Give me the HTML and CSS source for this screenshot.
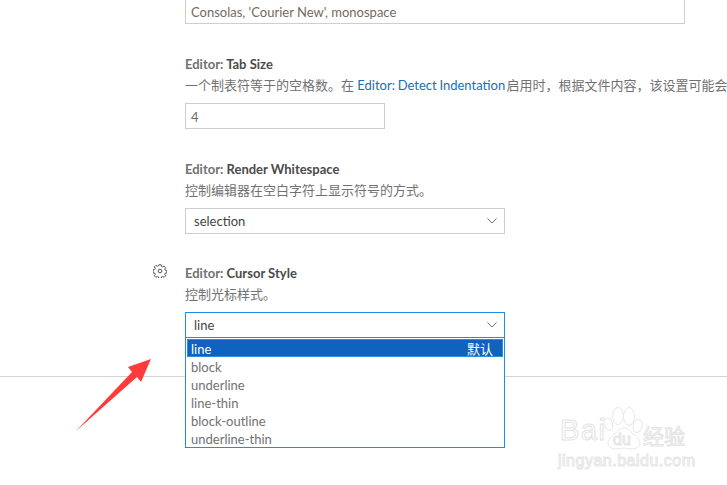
FILE: index.html
```html
<!DOCTYPE html>
<html lang="zh-CN">
<head>
  <meta charset="UTF-8">
  <title>Settings</title>
  <link rel="stylesheet" href="styles.css">
</head>
<body>
  <div class="list">
    <div class="setting first">
      <div class="input wide">Consolas, 'Courier New', monospace</div>
    </div>
    <div class="setting">
      <div class="title"><span class="cat">Editor: </span>Tab Size</div>
      <div class="desc">一个制表符等于的空格数。在 <span class="link">Editor: Detect Indentation</span> 启用时，根据文件内容，该设置可能会</div>
      <div class="input small">4</div>
    </div>
    <div class="setting">
      <div class="title"><span class="cat">Editor: </span>Render Whitespace</div>
      <div class="desc">控制编辑器在空白字符上显示符号的方式。</div>
      <div class="select">selection
        <svg class="chev" width="10" height="6" viewBox="0 0 10 6"><path d="M.5 .5 L5 5 L9.5 .5" fill="none" stroke="#6f6f6f" stroke-width="1"/></svg>
      </div>
    </div>
    <div class="setting last">
      <svg class="gear" width="14" height="14" viewBox="0 0 14 14" fill="none" stroke="#555" stroke-width="1">
        <circle cx="7" cy="7" r="1.8"/>
        <path d="M5.8 .8h2.4l.3 1.7 1.1.5 1.5-1 1.6 1.6-1 1.5.5 1.1 1.7.3v2.4l-1.7.3-.5 1.1 1 1.5-1.6 1.6-1.5-1-1.1.5-.3 1.7H5.8l-.3-1.7-1.1-.5-1.5 1-1.6-1.6 1-1.5-.5-1.1-1.7-.3V5.8l1.7-.3.5-1.1-1-1.5 1.6-1.6 1.5 1 1.1-.5z"/>
      </svg>
      <div class="title"><span class="cat">Editor: </span>Cursor Style</div>
      <div class="desc">控制光标样式。</div>
      <div class="select open">line
        <svg class="chev" width="10" height="6" viewBox="0 0 10 6"><path d="M.5 .5 L5 5 L9.5 .5" fill="none" stroke="#6f6f6f" stroke-width="1"/></svg>
        <ul class="menu">
          <li class="on">line<span>默认</span></li>
          <li>block</li>
          <li>underline</li>
          <li>line-thin</li>
          <li>block-outline</li>
          <li>underline-thin</li>
        </ul>
      </div>
    </div>
  </div>
  <div class="rule"></div>

  <svg class="arrow" width="90" height="85" viewBox="70 355 90 85">
    <path d="M151 359 L141 382 L137 377 L76 431 L132 372 L128 367 Z" fill="#ff3b3b"/>
  </svg>

  <div class="mark">
    <div class="markTop">
      <span class="bai">Bai</span>
      <svg class="paw" width="40" height="43" viewBox="0 0 40 43" fill="#fff" stroke="#e8e8e8" stroke-width="1">
        <ellipse cx="4.5" cy="17" rx="4" ry="6.5" transform="rotate(-15 4.5 17)"/>
        <ellipse cx="14" cy="9" rx="5.5" ry="8.5"/>
        <ellipse cx="25" cy="9.5" rx="5.5" ry="9"/>
        <ellipse cx="33.5" cy="19" rx="4.5" ry="6.5" transform="rotate(15 33.5 19)"/>
        <path d="M20 21c4 0 6 3 9 6 3 2 7 5 7 9 0 4-4 6-8 6-3 0-5-1-8-1s-5 1-8 1c-4 0-8-2-8-6 0-4 4-7 7-9 3-3 5-6 9-6z"/>
        <text x="18" y="38" text-anchor="middle" class="du">du</text>
      </svg>
      <span class="jy">经验</span>
    </div>
    <div class="url">jingyan.baidu.com</div>
  </div>
</body>
</html>
```

FILE: styles.css
```css
* {
  margin: 0;
  padding: 0;
  box-sizing: border-box;
}
html,
body {
  width: 100%;
  height: 100%;
  overflow: hidden;
  background-color: white;
  font-family: "Lato", "Noto Sans CJK SC", sans-serif;
  font-size: 13px;
  color: #717171;
}
.list {
  margin-top: -2px;
  padding-left: 185px;
}
.setting {
  position: relative;
  width: 542px;
  margin-top: 32px;
  white-space: nowrap;
}
.setting.first {
  margin-top: 0;
}
.setting.last {
  margin-top: 31px;
}
.title {
  height: 18px;
  line-height: 16px;
  font-weight: 700;
  color: #4a4a4a;
}
.cat {
  color: #717171;
}
.desc {
  height: 26px;
  margin-top: 3px;
  line-height: 16px;
  color: #717171;
}
.link {
  margin-right: -2px;
  word-spacing: -.6px;
  color: #1a6fb5;
}
.input {
  height: 26px;
  padding-left: 5px;
  line-height: 26px;
  border: 1px solid #cecece;
  color: #75695e;
}
.input.wide {
  width: 500px;
}
.input.small {
  width: 200px;
}
.select {
  position: relative;
  width: 320px;
  height: 26px;
  padding-left: 8px;
  line-height: 24px;
  border: 1px solid #cecece;
  color: #444;
}
.select.open {
  border-color: #1e8fe8;
}
.chev {
  position: absolute;
  top: 9px;
  right: 7px;
}
.menu {
  position: absolute;
  top: 24px;
  left: -1px;
  z-index: 2;
  width: 320px;
  height: 111px;
  padding: 1px;
  list-style: none;
  background-color: white;
  border: 1px solid #1e8fe8;
}
.menu li {
  display: flex;
  justify-content: space-between;
  height: 18px;
  padding: 0 9px 0 4px;
  line-height: 20px;
  color: #717171;
}
.menu li.on {
  padding: 0 9px 0 3px;
  color: white;
  background-color: #0f62bd;
  border: 1px solid #2b8fe0;
  line-height: 18px;
}
.gear {
  position: absolute;
  top: -1px;
  left: -32px;
}
.rule {
  height: 1px;
  margin-top: 38px;
  background-color: #d4d4d4;
}
.arrow {
  position: absolute;
  top: 355px;
  left: 70px;
}
.mark {
  position: absolute;
  top: 407px;
  left: 558px;
  width: 132px;
  color: white;
}
.markTop {
  display: flex;
  align-items: flex-end;
  height: 43px;
}
.bai {
  flex: none;
  width: 44px;
  margin-left: 2px;
  font-family: "Liberation Sans", sans-serif;
  font-size: 29px;
  line-height: 40px;
  letter-spacing: 1.5px;
  -webkit-text-stroke: 1px #e4e4e4;
}
.paw {
  flex: none;
}
.du {
  font-family: "Liberation Sans", sans-serif;
  font-size: 16px;
  fill: #fff;
  stroke: #e4e4e4;
}
.jy {
  margin-left: -1px;
  font-family: "Noto Sans CJK SC", sans-serif;
  font-size: 21px;
  line-height: 30px;
  -webkit-text-stroke: 1px #e4e4e4;
}
.url {
  margin-top: 1px;
  font-family: "Liberation Sans", sans-serif;
  font-size: 16px;
  line-height: 20px;
  letter-spacing: .5px;
  -webkit-text-stroke: 1px #e6e6e6;
}
```
